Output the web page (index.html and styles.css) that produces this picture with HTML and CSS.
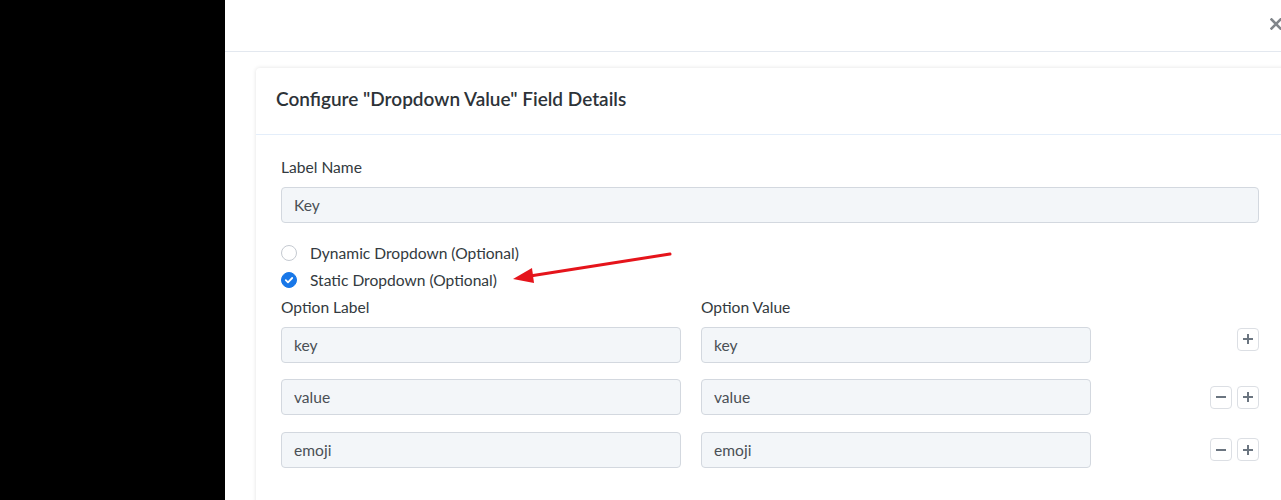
FILE: index.html
```html
<!DOCTYPE html>
<html>
<head>
<meta charset="utf-8">
<link rel="stylesheet" href="styles.css">
</head>
<body>
<div class="sidebar"></div>
<div class="panel">
  <div class="topbar">
    <svg class="close" width="12" height="12" viewBox="0 0 12 12"><path d="M1.5 1.5 L10.5 10.5 M10.5 1.5 L1.5 10.5" stroke="#80858a" stroke-width="2.6" stroke-linecap="square"/></svg>
  </div>
  <div class="card">
    <div class="card-header">Configure "Dropdown Value" Field Details</div>
    <div class="card-body">
      <div class="label">Label Name</div>
      <div class="input full">Key</div>
      <div class="radios">
        <div class="radio-row"><span class="radio"></span><span>Dynamic Dropdown (Optional)</span></div>
        <div class="radio-row"><span class="radio checked"><svg width="16" height="16" viewBox="0 0 16 16"><path d="M4.8 8.2 L7 10.3 L11.2 6" fill="none" stroke="#fff" stroke-width="1.8" stroke-linecap="round" stroke-linejoin="round"/></svg></span><span>Static Dropdown (Optional)</span></div>
      </div>
      <div class="options">
        <div class="label">Option Label</div>
        <div class="label">Option Value</div>
        <div></div>
        <div class="input">key</div>
        <div class="input">key</div>
        <div class="actions top"><span class="btn"><svg width="12" height="12" viewBox="0 0 12 12"><path d="M6 1v10M1 6h10" stroke="#6b7580" stroke-width="2"/></svg></span></div>
        <div class="input">value</div>
        <div class="input">value</div>
        <div class="actions"><span class="btn"><svg width="12" height="12" viewBox="0 0 12 12"><path d="M1 6h10" stroke="#6b7580" stroke-width="2"/></svg></span><span class="btn"><svg width="12" height="12" viewBox="0 0 12 12"><path d="M6 1v10M1 6h10" stroke="#6b7580" stroke-width="2"/></svg></span></div>
        <div class="input">emoji</div>
        <div class="input">emoji</div>
        <div class="actions"><span class="btn"><svg width="12" height="12" viewBox="0 0 12 12"><path d="M1 6h10" stroke="#6b7580" stroke-width="2"/></svg></span><span class="btn"><svg width="12" height="12" viewBox="0 0 12 12"><path d="M6 1v10M1 6h10" stroke="#6b7580" stroke-width="2"/></svg></span></div>
      </div>
    </div>
  </div>
  <svg class="arrow" width="250" height="60" viewBox="0 0 250 60">
    <line x1="428" y1="16" x2="288" y2="38" stroke="#e5141b" stroke-width="3" stroke-linecap="round"/>
    <polygon points="271,41 292,45 290,30" fill="#e5141b"/>
  </svg>
</div>
</body>
</html>
```

FILE: styles.css
```css
html, body {
  margin: 0;
  padding: 0;
  height: 500px;
  overflow: hidden;
  background: #fff;
}
body {
  display: flex;
  font-family: Lato, "Open Sans", sans-serif;
  color: #333a40;
}
.sidebar {
  width: 225px;
  flex: none;
  height: 500px;
  background: #000;
}
.panel {
  position: relative;
  width: 1056px;
  flex: none;
  background: #fff;
  overflow: hidden;
}
.topbar {
  height: 51px;
  border-bottom: 1px solid #e3e8ef;
  display: flex;
  align-items: flex-start;
  justify-content: flex-end;
}
.close {
  margin-top: 18px;
  margin-right: -1px;
}
.card {
  margin: 16px 0 0 31px;
  width: 1028px;
  background: #fff;
  border-radius: 4px 0 0 0;
  box-shadow: 0 0 4px rgba(0, 0, 0, 0.12);
  height: 460px;
}
.card-header {
  box-sizing: border-box;
  height: 67px;
  display: flex;
  align-items: center;
  padding-left: 20px;
  padding-bottom: 5px;
  font-size: 19px;
  font-weight: 600;
  color: #2d3338;
  border-bottom: 1px solid #e4eefa;
}
.card-body {
  padding: 22px 25px 0 25px;
}
.label {
  font-size: 15.6px;
  line-height: 20px;
  color: #333a40;
}
.input {
  box-sizing: border-box;
  height: 36px;
  background: #f3f6f9;
  border: 1px solid #d3d8df;
  border-radius: 4px;
  padding-left: 12px;
  display: flex;
  align-items: center;
  font-size: 15.6px;
  color: #4a5056;
}
.full {
  margin-top: 10px;
  width: 978px;
}
.radios {
  margin-top: 16px;
}
.radio-row {
  height: 27px;
  display: flex;
  align-items: center;
  font-size: 15.6px;
  color: #333a40;
}
.radio {
  box-sizing: border-box;
  width: 16px;
  height: 16px;
  border-radius: 50%;
  border: 1px solid #c5cad1;
  margin-right: 13px;
  flex: none;
  display: flex;
}
.radio.checked {
  background: #1877e8;
  border-color: #1877e8;
}
.radio.checked svg {
  margin: -1px;
}
.options {
  margin-top: 4px;
  display: grid;
  grid-template-columns: 400px 390px 1fr;
  column-gap: 20px;
  row-gap: 16.5px;
  width: 978px;
}
.options .label {
  margin-bottom: -7px;
}
.actions {
  display: flex;
  justify-content: flex-end;
  align-items: center;
  gap: 5px;
}
.actions.top {
  align-items: flex-start;
  padding-top: 1px;
}
.btn {
  box-sizing: border-box;
  width: 22px;
  height: 23px;
  border: 1px solid #dcdfe4;
  border-radius: 4px;
  display: flex;
  align-items: center;
  justify-content: center;
  background: #fff;
}
.arrow {
  position: absolute;
  left: 17px;
  top: 238px;
  overflow: visible;
}
```
